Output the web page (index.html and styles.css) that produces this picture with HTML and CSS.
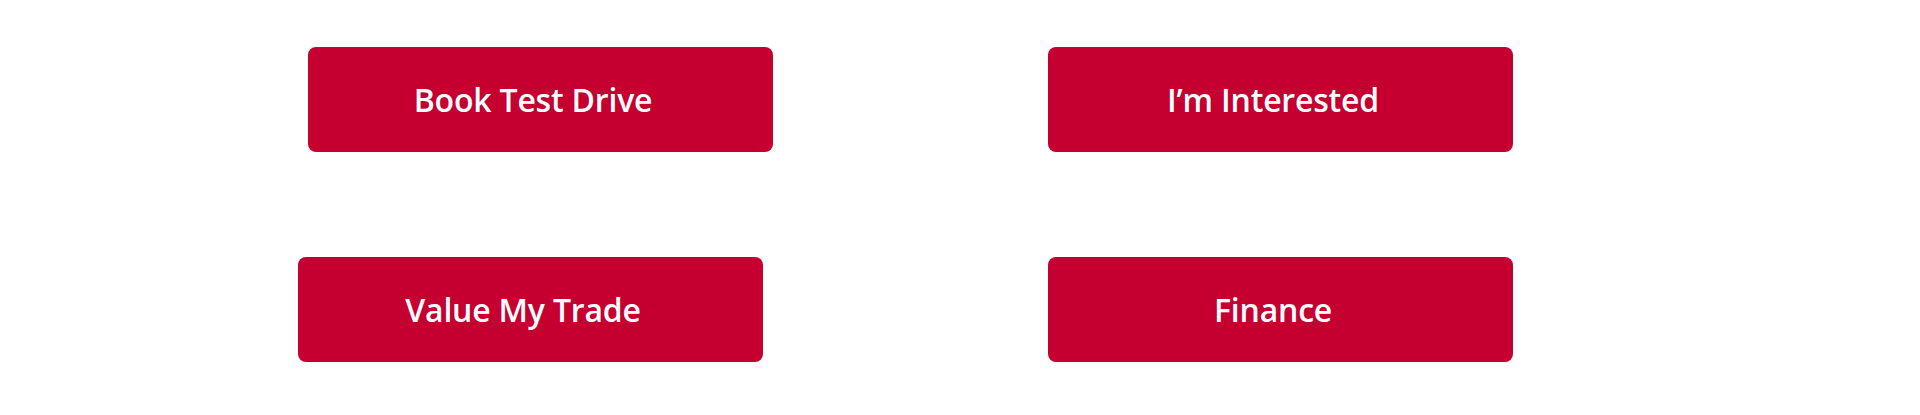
FILE: index.html
```html
<!DOCTYPE html>
<html lang="en">
<head>
    <meta charset="UTF-8">
    <meta name="viewport" content="width=device-width, initial-scale=1.0">
    <title>Vehicle Actions</title>
    <link rel="stylesheet" href="styles.css">
</head>
<body>
    <div class="actions">
        <div class="row row-top">
            <button class="action-button">Book Test Drive</button>
            <button class="action-button">I&rsquo;m Interested</button>
        </div>
        <div class="row row-bottom">
            <button class="action-button">Value My Trade</button>
            <button class="action-button">Finance</button>
        </div>
    </div>
</body>
</html>
```

FILE: styles.css
```css
body {
    margin: 0;
    background-color: white;
    font-family: "Open Sans", sans-serif;
}
.actions {
    display: flex;
    flex-direction: column;
    gap: 105px;
    padding-top: 47px;
}
.row {
    display: flex;
}
.row-top {
    padding-left: 308px;
    gap: 275px;
}
.row-bottom {
    padding-left: 298px;
    gap: 285px;
}
.action-button {
    width: 465px;
    height: 105px;
    padding: 0 15px 0 0;
    border: none;
    border-radius: 8px;
    background-color: #c50031;
    color: white;
    font-family: inherit;
    font-size: 32px;
    font-weight: 600;
    letter-spacing: -0.2px;
    cursor: pointer;
}
```
